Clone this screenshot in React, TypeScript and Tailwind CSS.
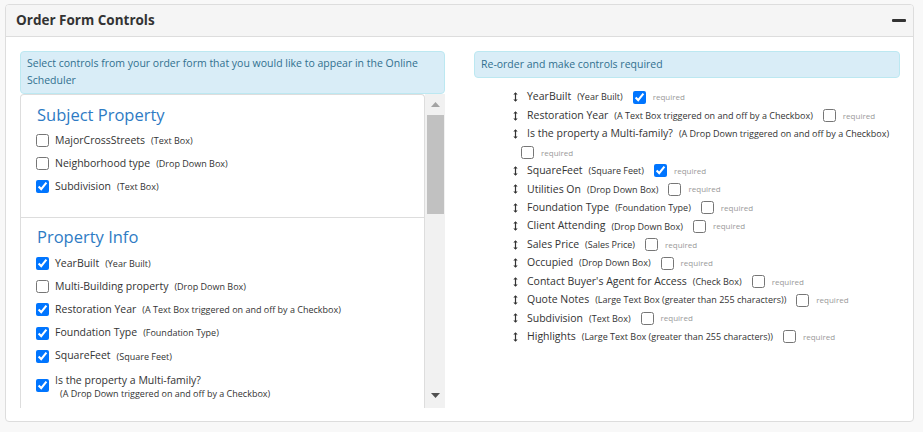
const subject = [
  { label: "MajorCrossStreets", type: "(Text Box)", checked: false },
  { label: "Neighborhood type", type: "(Drop Down Box)", checked: false },
  { label: "Subdivision", type: "(Text Box)", checked: true },
];

const propertyInfo = [
  { label: "YearBuilt", type: "(Year Built)", checked: true },
  { label: "Multi-Building property", type: "(Drop Down Box)", checked: false },
  { label: "Restoration Year", type: "(A Text Box triggered on and off by a Checkbox)", checked: true },
  { label: "Foundation Type", type: "(Foundation Type)", checked: true },
  { label: "SquareFeet", type: "(Square Feet)", checked: true },
];

const ordered = [
  { label: "YearBuilt", type: "(Year Built)", required: true },
  { label: "Restoration Year", type: "(A Text Box triggered on and off by a Checkbox)", required: false },
  { label: "Is the property a Multi-family?", type: "(A Drop Down triggered on and off by a Checkbox)", required: false, wrap: true },
  { label: "SquareFeet", type: "(Square Feet)", required: true },
  { label: "Utilities On", type: "(Drop Down Box)", required: false },
  { label: "Foundation Type", type: "(Foundation Type)", required: false },
  { label: "Client Attending", type: "(Drop Down Box)", required: false },
  { label: "Sales Price", type: "(Sales Price)", required: false },
  { label: "Occupied", type: "(Drop Down Box)", required: false },
  { label: "Contact Buyer's Agent for Access", type: "(Check Box)", required: false },
  { label: "Quote Notes", type: "(Large Text Box (greater than 255 characters))", required: false },
  { label: "Subdivision", type: "(Text Box)", required: false },
  { label: "Highlights", type: "(Large Text Box (greater than 255 characters))", required: false },
];

function Check({ checked }: { checked: boolean }) {
  return <input type="checkbox" defaultChecked={checked} className="m-0 w-[13px] h-[13px] shrink-0" />;
}

function DragArrow() {
  return (
    <svg width="5" height="10" viewBox="0 0 5 10" className="shrink-0 text-[#333]">
      <path d="M2.5 1.5V8.5" stroke="currentColor" strokeWidth="1.2" />
      <path d="M0.3 2.6L2.5 0.2L4.7 2.6Z M0.3 7.4L2.5 9.8L4.7 7.4Z" fill="currentColor" />
    </svg>
  );
}

function Row({ label, type, checked, h }: { label: string; type: string; checked: boolean; h: string }) {
  return (
    <div className={`${h} flex items-center gap-[6px]`}>
      <Check checked={checked} />
      <span className="text-[10.5px] text-[#333]">{label}</span>
      <span className="text-[9px] text-[#333]">{type}</span>
    </div>
  );
}

export default function App() {
  return (
    <div className="min-h-screen bg-[#f8f8f8] pt-[4px] pl-[5px] font-['Open_Sans',sans-serif]">
      <div className="w-[909px] h-[418px] bg-white border border-[#dddddd] rounded-[4px] overflow-hidden flex flex-col">
        <div className="h-[32px] shrink-0 bg-[#f5f5f5] border-b border-[#dddddd] flex items-center justify-between pl-[10px] pr-[7px]">
          <h3 className="text-[13.5px] font-bold text-[#333]">Order Form Controls</h3>
          <span className="w-[14px] h-[3px] bg-[#333] rounded-[1px]" />
        </div>

        <div className="flex gap-[29px] pl-[14px] pt-[14px]">
          {/* left column */}
          <div className="w-[425px] flex flex-col">
            <div className="h-[43px] bg-[#d9edf7] border border-[#bce8f1] rounded-[4px] px-[6px] pt-[3px] text-[10.5px] leading-[17px] text-[#31708f]">
              Select controls from your order form that you would like to appear in the Online Scheduler
            </div>
            <div className="flex h-[314px]">
              <div className="w-[405px] border border-b-0 border-[#dddddd] rounded-t-[4px] overflow-hidden">
                <div className="px-[15px] pt-[7px] pb-[19px] border-b border-[#dddddd]">
                  <h2 className="text-[16.5px] leading-[26px] font-medium text-[#2e7bc4] pl-[1px] mb-[1px]">Subject Property</h2>
                  {subject.map((r) => (
                    <Row key={r.label} h="h-[23px]" {...r} />
                  ))}
                </div>
                <div className="px-[15px] pt-[6px]">
                  <h2 className="text-[16.5px] leading-[26px] font-medium text-[#2e7bc4] pl-[1px] mb-[2px]">Property Info</h2>
                  {propertyInfo.map((r) => (
                    <Row key={r.label} h="h-[23.2px]" {...r} />
                  ))}
                  <div className="flex gap-[6px] pt-[5px]">
                    <div className="pt-[1px]">
                      <Check checked={true} />
                    </div>
                    <div className="flex flex-col">
                      <span className="text-[10.5px] leading-[14px] text-[#333]">Is the property a Multi-family?</span>
                      <span className="text-[9px] leading-[14px] text-[#333] pl-[5px]">(A Drop Down triggered on and off by a Checkbox)</span>
                    </div>
                  </div>
                </div>
              </div>
              {/* scrollbar */}
              <div className="w-[20px] bg-[#f1f1f1] flex flex-col items-center">
                <svg width="9" height="5" viewBox="0 0 9 5" className="mt-[8px]">
                  <path d="M0 5L4.5 0L9 5Z" fill="#a3a3a3" />
                </svg>
                <div className="w-[17px] h-[99px] bg-[#c1c1c1] mt-[8px] ml-[1px]" />
                <div className="flex-1" />
                <svg width="9" height="5" viewBox="0 0 9 5" className="mb-[10px]">
                  <path d="M0 0L4.5 5L9 0Z" fill="#505050" />
                </svg>
              </div>
            </div>
          </div>

          {/* right column */}
          <div className="w-[426px] flex flex-col">
            <div className="h-[27px] bg-[#d9edf7] border border-[#bce8f1] rounded-[4px] px-[6px] flex items-center text-[10.5px] text-[#31708f]">
              Re-order and make controls required
            </div>
            <ul className="mt-[10px] pl-[39px]">
              {ordered.map((r) => (
                <li key={r.label}>
                  <div className="h-[18.45px] flex items-center">
                    <DragArrow />
                    <span className="text-[10.5px] text-[#333] ml-[9px]">{r.label}</span>
                    <span className="text-[9px] text-[#333] ml-[6px]">{r.type}</span>
                    {!r.wrap && (
                      <>
                        <span className="ml-[10px] flex"><Check checked={r.required} /></span>
                        <span className="text-[8px] text-[#999] ml-[7px]">required</span>
                      </>
                    )}
                  </div>
                  {r.wrap && (
                    <div className="h-[18.45px] flex items-center pl-[8px]">
                      <Check checked={r.required} />
                      <span className="text-[8px] text-[#999] ml-[7px]">required</span>
                    </div>
                  )}
                </li>
              ))}
            </ul>
          </div>
        </div>
      </div>
    </div>
  );
}
